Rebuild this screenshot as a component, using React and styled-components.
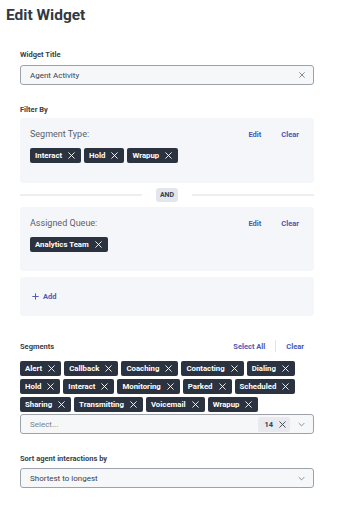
import styled, { createGlobalStyle } from 'styled-components';

const GlobalStyle = createGlobalStyle`
    * { box-sizing: border-box; }
    body {
        margin: 0;
        background: #fff;
        font-family: Roboto, "Liberation Sans", sans-serif;
        color: #33383f;
    }
`;

const Page = styled.div`
    width: 339px;
    padding: 5px 25px 0 20px;
`;

const Title = styled.h1`
    margin: 0 0 0 -14px;
    font-size: 15.5px;
    font-weight: 700;
    line-height: 20px;
    color: #333942;
`;

const Section = styled.div`
    margin-top: ${p => p.top}px;
`;

const LabelRow = styled.div`
    display: flex;
    align-items: center;
    justify-content: space-between;
    height: 14px;
    margin-bottom: ${p => p.gap || 4}px;
`;

const Label = styled.div`
    font-size: 7.5px;
    font-weight: 700;
    color: #3a3f48;
`;

const Input = styled.div`
    display: flex;
    align-items: center;
    height: 20px;
    padding: 0 8px 0 9px;
    background: #f6f7f9;
    border: 1px solid #9da2aa;
    border-radius: 3px;
    font-size: 8px;
    color: ${p => (p.muted ? '#7a7f87' : '#3a3f48')};
`;

const InputText = styled.span`
    flex: 1;
`;

const Panel = styled.div`
    background: #f5f6f9;
    border-radius: 3px;
    padding: ${p => p.pad || '10px 15px 0 10px'};
    height: ${p => p.h}px;
`;

const PanelHead = styled.div`
    display: flex;
    align-items: center;
    height: 12px;
    margin-bottom: 8px;
`;

const PanelTitle = styled.div`
    flex: 1;
    font-size: 9px;
    color: #5b6068;
`;

const LinkBtn = styled.span`
    font-size: 7.5px;
    font-weight: 700;
    color: #4b58b8;
    margin-left: ${p => p.ml || 0}px;
`;

const Chips = styled.div`
    display: flex;
    flex-wrap: wrap;
    gap: 3px;
`;

const Chip = styled.span`
    display: inline-flex;
    align-items: center;
    height: 15px;
    padding: 0 6px 0 5px;
    background: #2b3240;
    border-radius: 2px;
    color: #fff;
    font-size: 7.8px;
    font-weight: 700;
    gap: 6px;
`;

const Divider = styled.div`
    display: flex;
    align-items: center;
    height: 24px;
    gap: 14px;
    &::before, &::after {
        content: '';
        flex: 1;
        height: 2px;
        background: #eceef2;
    }
`;

const AndBadge = styled.span`
    background: #e4e6ee;
    border-radius: 3px;
    padding: 0 4px;
    height: 14px;
    line-height: 14px;
    font-size: 7px;
    font-weight: 700;
    color: #3a3f48;
`;

const AddRow = styled.div`
    display: flex;
    align-items: center;
    height: 100%;
    gap: 4px;
    font-size: 7.5px;
    font-weight: 700;
    color: #4b58b8;
`;

const Sep = styled.span`
    width: 1px;
    height: 12px;
    background: #e1e3e8;
    margin: 0 10px;
`;

const Links = styled.div`
    display: flex;
    align-items: center;
    padding-right: 10px;
`;

const CountBadge = styled.span`
    display: inline-flex;
    align-items: center;
    gap: 6px;
    height: 15px;
    padding: 0 4px 0 6px;
    background: #e8eaf0;
    border-radius: 2px;
    font-size: 7.5px;
    font-weight: 700;
    color: #3a3f48;
    margin-right: 8px;
`;

const X = ({ size = 7, color = '#fff', w = 1.3 }) => (
    <svg width={size} height={size} viewBox="0 0 10 10">
        <path d="M1 1L9 9M9 1L1 9" stroke={color} strokeWidth={w} strokeLinecap="round" />
    </svg>
);

const Chevron = () => (
    <svg width="7" height="5" viewBox="0 0 10 6">
        <path d="M1 1l4 4 4-4" stroke="#6b7079" strokeWidth="1.1" fill="none" />
    </svg>
);

const Plus = () => (
    <svg width="7" height="7" viewBox="0 0 10 10">
        <path d="M5 0.5v9M0.5 5h9" stroke="#4b58b8" strokeWidth="1.4" />
    </svg>
);

const segments = [
    'Alert', 'Callback', 'Coaching', 'Contacting', 'Dialing',
    'Hold', 'Interact', 'Monitoring', 'Parked', 'Scheduled',
    'Sharing', 'Transmitting', 'Voicemail', 'Wrapup'
];

const ChipList = ({ items }) => (
    <Chips>
        {items.map(t => (
            <Chip key={t}>{t}<X /></Chip>
        ))}
    </Chips>
);

const App = () => {
    return (
        <>
            <GlobalStyle />
            <Page>
                <Title>Edit Widget</Title>

                <Section top={22}>
                    <LabelRow><Label>Widget Title</Label></LabelRow>
                    <Input>
                        <InputText>Agent Activity</InputText>
                        <X size={6} color="#5d626a" w={1.2} />
                    </Input>
                </Section>

                <Section top={17}>
                    <LabelRow gap={2}><Label>Filter By</Label></LabelRow>
                    <Panel h={65}>
                        <PanelHead>
                            <PanelTitle>Segment Type:</PanelTitle>
                            <LinkBtn>Edit</LinkBtn>
                            <LinkBtn ml={20}>Clear</LinkBtn>
                        </PanelHead>
                        <ChipList items={['Interact', 'Hold', 'Wrapup']} />
                    </Panel>
                    <Divider><AndBadge>AND</AndBadge></Divider>
                    <Panel h={64}>
                        <PanelHead>
                            <PanelTitle>Assigned Queue:</PanelTitle>
                            <LinkBtn>Edit</LinkBtn>
                            <LinkBtn ml={20}>Clear</LinkBtn>
                        </PanelHead>
                        <ChipList items={['Analytics Team']} />
                    </Panel>
                    <Section top={6}>
                        <Panel h={39} pad="0 12px">
                            <AddRow><Plus />Add</AddRow>
                        </Panel>
                    </Section>
                </Section>

                <Section top={23}>
                    <LabelRow gap={8}>
                        <Label>Segments</Label>
                        <Links>
                            <LinkBtn>Select All</LinkBtn>
                            <Sep />
                            <LinkBtn>Clear</LinkBtn>
                        </Links>
                    </LabelRow>
                    <ChipList items={segments} />
                    <Section top={2}>
                        <Input muted>
                            <InputText>Select...</InputText>
                            <CountBadge>14<X size={7} color="#3a3f48" /></CountBadge>
                            <Chevron />
                        </Input>
                    </Section>
                </Section>

                <Section top={17}>
                    <LabelRow gap={3}><Label>Sort agent interactions by</Label></LabelRow>
                    <Input>
                        <InputText>Shortest to longest</InputText>
                        <Chevron />
                    </Input>
                </Section>
            </Page>
        </>
    );
};

export default App;
